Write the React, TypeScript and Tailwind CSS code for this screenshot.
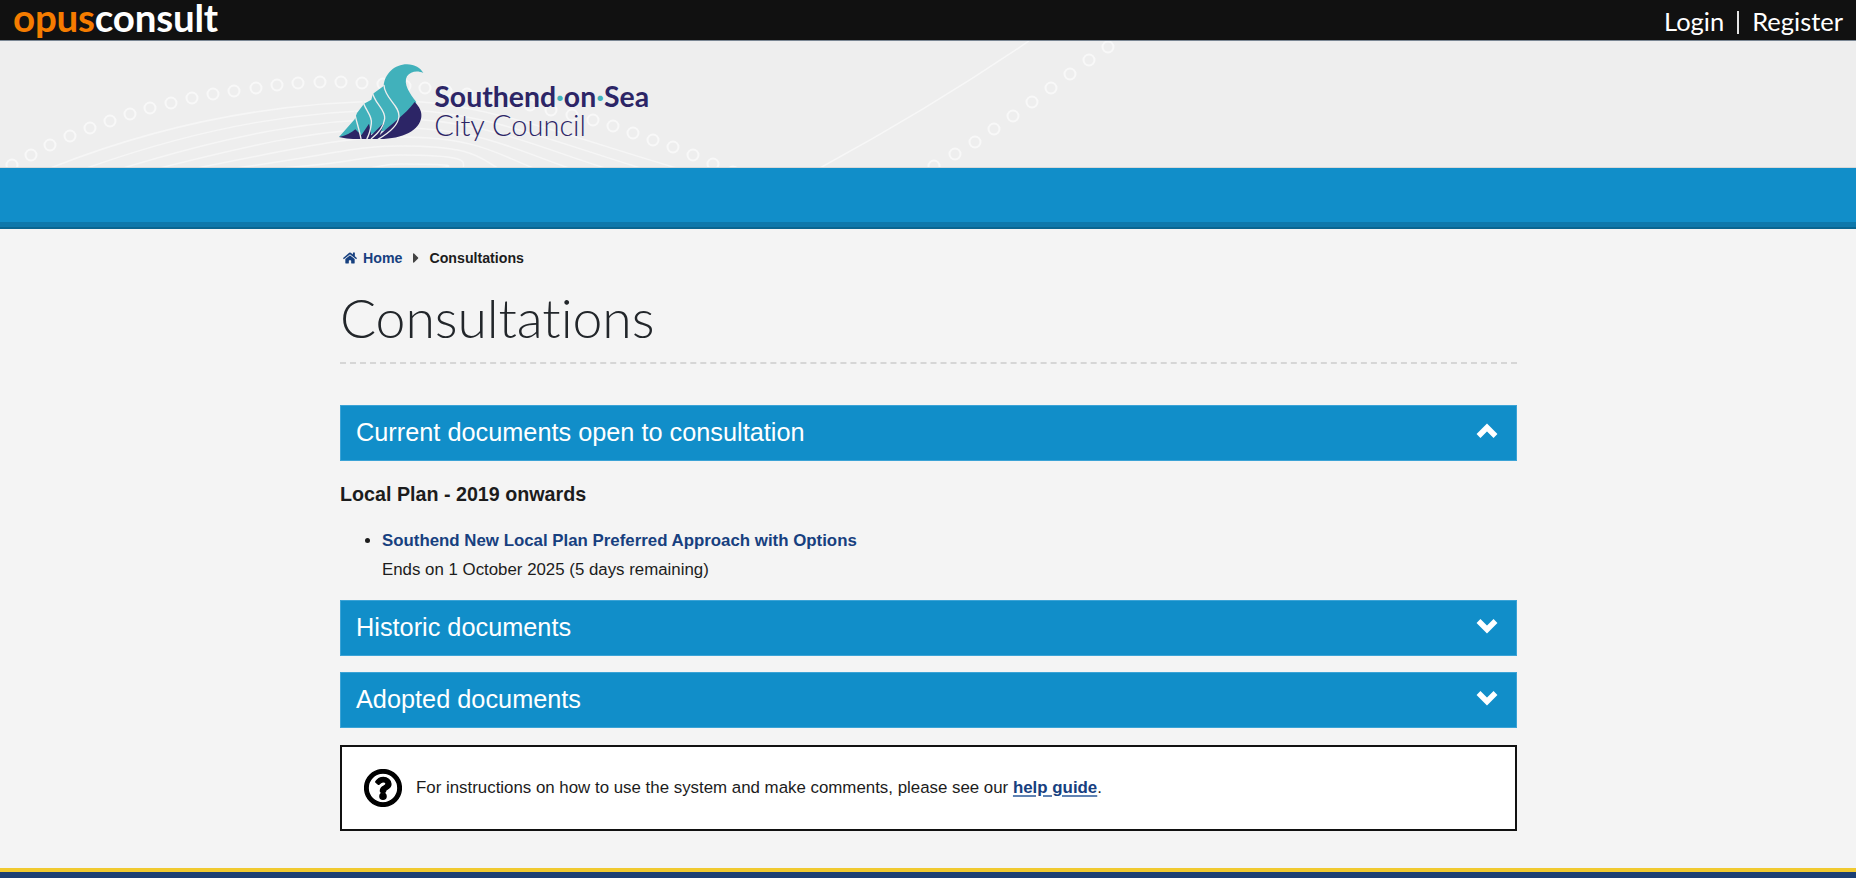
import { FaCaretRight, FaHome, FaRegQuestionCircle } from "react-icons/fa";

const leftDots = [
  [12, 165], [31, 155], [50, 145], [70, 136], [90, 128], [110, 121], [130, 114], [150, 108],
  [171, 103], [192, 98], [213, 94], [234, 91], [256, 88], [277, 85], [298, 83], [320, 82],
  [341, 82], [362, 83], [383, 84], [405, 86], [425, 88], [446, 91], [467, 94], [488, 97],
  [509, 101], [530, 105], [551, 110], [572, 115], [593, 120], [613, 126], [633, 133],
  [653, 140], [673, 147], [693, 155], [713, 164], [733, 172],
];

const rightDots = [
  [1108, 47], [1089, 60], [1070, 74], [1051, 88], [1032, 102], [1013, 116], [994, 129], [975, 142], [955, 154], [934, 166],
];

const arcs = [0, 1, 2, 3, 4, 5, 6, 7];

function BannerPattern() {
  return (
    <svg className="absolute left-0 top-0" width="1200" height="126" viewBox="0 41 1200 126" fill="none">
      {[...leftDots, ...rightDots].map(([x, y]) => (
        <circle key={`${x}-${y}`} cx={x} cy={y} r="5.5" stroke="#f8f8f8" strokeWidth="2" />
      ))}
      {arcs.map((i) => (
        <path
          key={i}
          d={`M${48 + i * 36} 169 C${180 + i * 30} ${116 + i * 8} ${300 + i * 10} ${101 + i * 9} ${400} ${101 + i * 9} C${480} ${101 + i * 9} ${580 - i * 20} ${140 + i * 4} ${680 - i * 36} 169`}
          stroke="#f6f6f6"
          strokeWidth="1.5"
        />
      ))}
      <path d="M1029 41 C960 88 890 130 818 169" stroke="#f7f7f7" strokeWidth="1.5" />
    </svg>
  );
}

function ShellLogo() {
  return (
    <svg width="85.33" height="80" viewBox="58 65 256 240" className="flex-none">
      <path
        d="M58 290 L105 237 L112 218 L133 190 L155 178 L160 160 L192 137 C195 100 225 72 262 72 C285 72 303 84 311 98 C295 90 272 92 262 108 C250 130 270 160 290 185 L235 260 L120 290 Z"
        fill="#41b1bb"
      />
      <path
        d="M58 290 C78 286 95 278 107 267 L125 285 L148 250 L155 285 L195 245 L180 285 C215 250 255 225 285 185 C300 200 307 215 305 230 C300 270 250 296 180 296 C130 296 85 298 58 290 Z"
        fill="#2c2566"
      />
      <g fill="none" stroke="#eeeeee" strokeWidth="4" strokeLinecap="round">
        <path d="M105 215 C107 235 116 255 124 295" />
        <path d="M130 180 C132 205 160 225 155 250 C153 265 150 280 142 295" />
        <path d="M157 150 C162 190 198 205 195 235 C192 262 175 280 155 295" />
        <path d="M193 135 C195 175 240 195 238 228 C236 255 205 280 175 297" />
      </g>
    </svg>
  );
}

function Chevron({ up }: { up?: boolean }) {
  return (
    <svg width="24" height="18" viewBox="0 0 24 18" fill="none" className="mb-[5px] flex-none">
      <polyline
        points={up ? "3.5,14 12,5.5 20.5,14" : "3.5,4 12,12.5 20.5,4"}
        stroke="white"
        strokeWidth="5.5"
      />
    </svg>
  );
}

function AccordionBar({ title, open }: { title: string; open?: boolean }) {
  return (
    <div className="flex h-14 items-center justify-between border border-[#3ba3d6] bg-[#118ec9] pl-[15px] pr-[17px] text-white">
      <span className="text-[25.3px] leading-none">{title}</span>
      <Chevron up={open} />
    </div>
  );
}

export default function App() {
  return (
    <div className="flex h-screen flex-col overflow-hidden bg-[#f4f4f4] font-['Liberation_Sans',Arial,sans-serif] text-[#1c1c1c]">
      <header className="flex h-[41px] flex-none items-start justify-between border-b border-[#7b8794] bg-[#111111]">
        <div className="ml-[13px] font-['Lato',sans-serif] text-[38.5px] font-bold leading-[34px] tracking-[-0.2px]">
          <span className="text-[#f57c00]">opus</span>
          <span className="text-white">consult</span>
        </div>
        <nav className="mr-[13px] flex items-center font-['Lato',sans-serif] text-[25.5px] leading-[42px] text-white">
          <a>Login</a>
          <span className="mx-[13px] mt-[3px] h-[23px] w-[2px] bg-[#e4e4e4]" />
          <a>Register</a>
        </nav>
      </header>

      <div className="relative h-[127px] flex-none border-b border-[#d8d8d8] bg-[#eeeeee]">
        <BannerPattern />
        <div className="relative ml-[339px] flex h-full items-start pt-[21px]">
          <ShellLogo />
          <div className="ml-[10px] mt-[19px] font-['Lato',sans-serif] text-[#2c2566]">
            <div className="text-[28.4px] font-bold leading-[30px]">
              Southend<span className="text-[#41b1bb]">·</span>on<span className="text-[#41b1bb]">·</span>Sea
            </div>
            <div className="text-[29px] font-light leading-[27px]">City Council</div>
          </div>
        </div>
      </div>

      <div className="h-[54px] flex-none bg-[#118ec9]" />
      <div className="h-[5px] flex-none bg-[#0e78ab]" />
      <div className="h-[2px] flex-none bg-[#0a6590]" />

      <main className="ml-[340px] w-[1177px] flex-none">
        <nav className="flex items-center pt-[19px] text-[14.2px] font-bold leading-5">
          <FaHome className="ml-[3px] text-[14px] text-[#17407f]" />
          <a className="ml-[6px] text-[#17407f]">Home</a>
          <FaCaretRight className="ml-[6px] text-[16px] text-[#444444]" />
          <span className="ml-[5px]">Consultations</span>
        </nav>

        <h1 className="mt-[17px] border-b-2 border-dashed border-[#d6d6d6] pb-[12px] font-['Lato',sans-serif] text-[53.6px] font-light leading-[65px] tracking-[-0.1px] text-[#22262a] [font-variant-ligatures:none]">
          Consultations
        </h1>

        <div className="mt-[41px]">
          <AccordionBar title="Current documents open to consultation" open />
          <h2 className="mt-[21px] text-[19.7px] font-bold leading-6">Local Plan - 2019 onwards</h2>
          <ul className="mt-[20px] list-disc pl-[42px] text-[16.85px]">
            <li className="leading-[29px]">
              <a className="font-bold text-[#17407f]">Southend New Local Plan Preferred Approach with Options</a>
              <p className="leading-[29px]">Ends on 1 October 2025 (5 days remaining)</p>
            </li>
          </ul>
        </div>

        <div className="mt-[16px] flex flex-col gap-4">
          <AccordionBar title="Historic documents" />
          <AccordionBar title="Adopted documents" />
        </div>

        <div className="mt-[17px] flex h-[86px] items-center border-2 border-[#111111] bg-white pl-[22px] text-[16.87px]">
          <FaRegQuestionCircle className="text-[38px] text-black" stroke="currentColor" strokeWidth={18} />
          <p className="ml-[14px]">
            For instructions on how to use the system and make comments, please see our{" "}
            <a className="font-bold text-[#17407f] underline decoration-[#5f82b3] decoration-2 underline-offset-2">help guide</a>.
          </p>
        </div>
      </main>

      <footer className="mt-[37px] flex-1 border-t-4 border-[#f0c92f] bg-[#1c3f73]" />
    </div>
  );
}
